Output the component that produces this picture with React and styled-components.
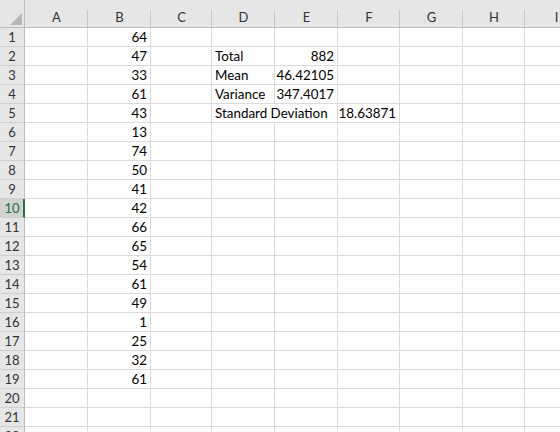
import React from "react";
import styled, { createGlobalStyle } from "styled-components";

const Global = createGlobalStyle`
  html, body { margin: 0; padding: 0; background: #ffffff; overflow: hidden; }
  body { font-family: Lato, "Open Sans", sans-serif; }
`;

const COLS = ["A", "B", "C", "D", "E", "F", "G", "H", "I"];
const WIDTHS = [63, 63, 61, 63, 63, 62, 63, 62, 63];
const TEMPLATE = `25px ${WIDTHS.map((w) => w + "px").join(" ")}`;

const Sheet = styled.div`
  width: 560px;
  height: 432px;
  overflow: hidden;
  display: flex;
  flex-direction: column;
  font-size: 13.4px;
  color: #000;
`;

const Row = styled.div`
  display: grid;
  grid-template-columns: ${TEMPLATE};
  flex: none;
`;

const Corner = styled.div`
  height: 27px;
  background: #e6e6e6;
  border-bottom: 1px solid #bdbdbd;
  border-right: 1px solid #bdbdbd;
  position: relative;
  box-sizing: content-box;
  width: 24px;
`;

const Triangle = styled.div`
  position: absolute;
  right: 2px;
  bottom: 2px;
  width: 0;
  height: 0;
  border-left: 12px solid transparent;
  border-bottom: 12px solid #b8b8b8;
`;

const ColHead = styled.div`
  background: #e6e6e6;
  border-bottom: 1px solid #bdbdbd;
  position: relative;
  display: flex;
  align-items: flex-end;
  justify-content: center;
  padding-bottom: 3px;
  box-sizing: border-box;
  height: 28px;
  color: #333;
  font-size: 13px;
  line-height: 14px;
  &::after {
    content: "";
    position: absolute;
    right: 0;
    top: 10px;
    bottom: 0;
    width: 1px;
    background: #c8c8c8;
  }
`;

const RowHead = styled.div`
  height: 19px;
  box-sizing: border-box;
  background: ${(p) => (p.$active ? "#d2d2d2" : "#e6e6e6")};
  color: ${(p) => (p.$active ? "#217346" : "#333")};
  border-bottom: 1px solid #cfcfcf;
  border-right: ${(p) => (p.$active ? "2px solid #217346" : "1px solid #bdbdbd")};
  display: flex;
  align-items: center;
  justify-content: center;
  font-size: 13px;
  line-height: 17px;
  padding-top: 1px;
  padding-left: ${(p) => (p.$active ? "1px" : "0")};
`;

const Cell = styled.div`
  height: 19px;
  box-sizing: border-box;
  border-bottom: 1px solid #dadada;
  border-right: 1px solid ${(p) => (p.$overflow ? "transparent" : "#dadada")};
  padding: 1px 3px 0;
  display: flex;
  align-items: center;
  justify-content: ${(p) => (p.$num ? "flex-end" : "flex-start")};
  white-space: nowrap;
  overflow: visible;
  line-height: 17px;
  position: relative;
  z-index: ${(p) => (p.$overflow ? 1 : 0)};
`;

const values = [64, 47, 33, 61, 43, 13, 74, 50, 41, 42, 66, 65, 54, 61, 49, 1, 25, 32, 61];

const extra = {
  2: { D: ["Total", false], E: ["882", true] },
  3: { D: ["Mean", false], E: ["46.42105", true] },
  4: { D: ["Variance", false], E: ["347.4017", true] },
  5: { D: ["Standard Deviation", false, true], F: ["18.63871", true] },
};

export default function App() {
  const rows = [];
  for (let r = 1; r <= 22; r++) {
    const data = extra[r] || {};
    rows.push(
      <Row key={r}>
        <RowHead $active={r === 10}>{r}</RowHead>
        {COLS.map((c) => {
          let content = null;
          let num = false;
          let ov = false;
          if (c === "B" && values[r - 1] !== undefined) {
            content = values[r - 1];
            num = true;
          } else if (data[c]) {
            content = data[c][0];
            num = data[c][1];
            ov = !!data[c][2];
          }
          return (
            <Cell key={c} $num={num} $overflow={ov}>
              {content}
            </Cell>
          );
        })}
      </Row>
    );
  }
  return (
    <>
      <Global />
      <Sheet>
        <Row>
          <Corner>
            <Triangle />
          </Corner>
          {COLS.map((c) => (
            <ColHead key={c}>{c}</ColHead>
          ))}
        </Row>
        {rows}
      </Sheet>
    </>
  );
}
